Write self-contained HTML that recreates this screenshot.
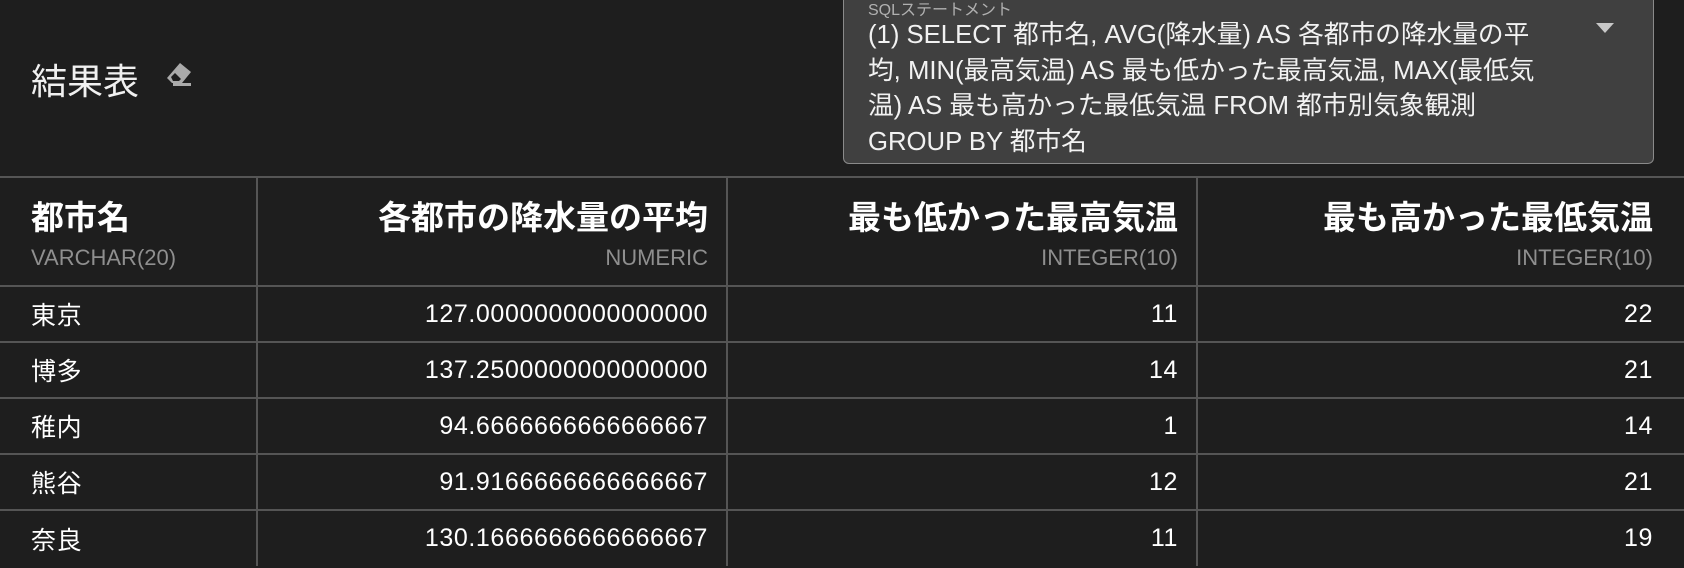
<!DOCTYPE html>
<html><head><meta charset="utf-8"><style>
*{margin:0;padding:0;box-sizing:border-box}
body{width:1684px;height:568px;overflow:hidden;background:#1e1e1e;color:#fff;font-family:"Liberation Sans","Noto Sans CJK JP",sans-serif;position:relative}
.title{position:absolute;left:31px;top:53px;font-size:36px;color:#f0f0f0}
.er{position:absolute;left:165px;top:62px}
.box{position:absolute;left:843px;top:-6px;width:811px;height:170px;background:#404040;border:1.5px solid #8a8a8a;border-radius:6px}
.lab{position:absolute;left:24px;top:1px;font-size:16px;color:#b0b0b0}
.sql{position:absolute;left:24px;top:23px;font-size:25.7px;line-height:35.5px;color:#f2f2f2;white-space:nowrap}
.tri{position:absolute;left:752px;top:28px;width:0;height:0;border-left:9px solid transparent;border-right:9px solid transparent;border-top:10px solid #c8c8c8}
table{position:absolute;left:0;top:176px;width:1684px;border-collapse:collapse;table-layout:fixed}
td{border:2px solid #555;font-size:25px;letter-spacing:.6px;height:56px;padding:0 18px 0 31px;vertical-align:middle}
tr td:first-child{border-left:none}tr td:last-child{border-right:none;padding-right:31px}
tr:last-child td{border-bottom:none}
.r{text-align:right}
th{border:2px solid #555;height:109px;text-align:left;padding:0 18px 0 31px;font-weight:bold;vertical-align:top;white-space:nowrap}
th:first-child{border-left:none}th:last-child{border-right:none;padding-right:31px}
th .h{font-size:33px;margin-top:13px;display:block}
th .t{font-size:22px;color:#8f8f8f;font-weight:normal;display:block;margin-top:6px}
th.r{text-align:right}
</style></head><body>
<div class="title">結果表</div>
<svg class="er" width="30" height="26" viewBox="0 0 30 26"><path d="M15 1 L26 10 L17 21 L7 21 L2 16 Z" fill="#aaa"/><path d="M6 15 L10 11 L16 17 L14 19 L8 19 Z" fill="#1e1e1e"/><rect x="8" y="21" width="18" height="3" fill="#aaa"/></svg>
<div class="box"><div class="lab">SQLステートメント</div>
<div class="sql">(1) SELECT 都市名, AVG(降水量) AS 各都市の降水量の平<br>均, MIN(最高気温) AS 最も低かった最高気温, MAX(最低気<br>温) AS 最も高かった最低気温 FROM 都市別気象観測<br>GROUP BY 都市名</div>
<div class="tri"></div></div>
<table>
<colgroup><col style="width:257px"><col style="width:470px"><col style="width:470px"><col style="width:487px"></colgroup>
<tr><th><span class="h">都市名</span><span class="t">VARCHAR(20)</span></th><th class="r"><span class="h">各都市の降水量の平均</span><span class="t">NUMERIC</span></th><th class="r"><span class="h">最も低かった最高気温</span><span class="t">INTEGER(10)</span></th><th class="r"><span class="h">最も高かった最低気温</span><span class="t">INTEGER(10)</span></th></tr>
<tr><td>東京</td><td class="r">127.0000000000000000</td><td class="r">11</td><td class="r">22</td></tr>
<tr><td>博多</td><td class="r">137.2500000000000000</td><td class="r">14</td><td class="r">21</td></tr>
<tr><td>稚内</td><td class="r">94.6666666666666667</td><td class="r">1</td><td class="r">14</td></tr>
<tr><td>熊谷</td><td class="r">91.9166666666666667</td><td class="r">12</td><td class="r">21</td></tr>
<tr><td>奈良</td><td class="r">130.1666666666666667</td><td class="r">11</td><td class="r">19</td></tr>
</table>
</body></html>
